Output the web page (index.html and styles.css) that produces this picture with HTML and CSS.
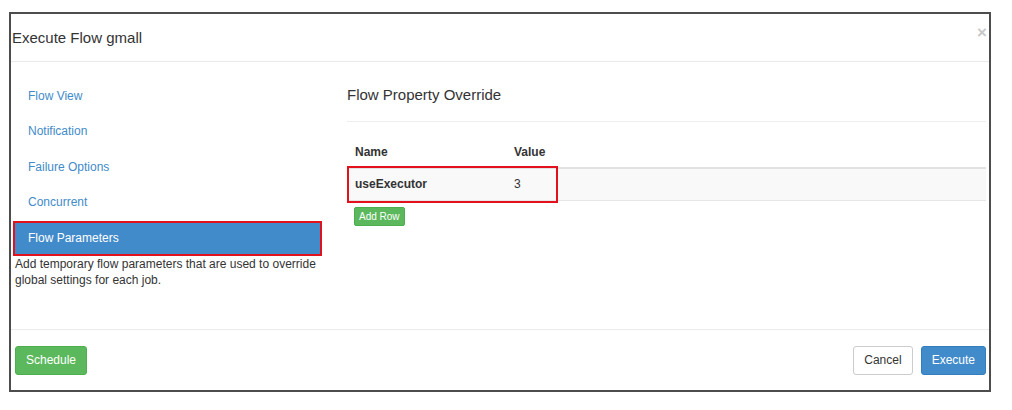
FILE: index.html
```html
<!DOCTYPE html>
<html>
<head>
<meta charset="utf-8">
<link rel="stylesheet" href="styles.css">
</head>
<body>
<div class="modal">
  <div class="modal-header">
    <h4 class="modal-title">Execute Flow gmall</h4>
    <span class="close">×</span>
  </div>
  <div class="modal-body">
    <div class="side">
      <ul class="nav">
        <li class="nav-item">Flow View</li>
        <li class="nav-item">Notification</li>
        <li class="nav-item">Failure Options</li>
        <li class="nav-item">Concurrent</li>
        <li class="nav-item active">Flow Parameters</li>
      </ul>
      <p class="desc">Add temporary flow parameters that are used to override global settings for each job.</p>
    </div>
    <div class="main">
      <h3 class="section-title">Flow Property Override</h3>
      <div class="table-wrap">
        <table class="props">
          <thead>
            <tr><th class="col-name">Name</th><th>Value</th></tr>
          </thead>
          <tbody>
            <tr><td class="col-name">useExecutor</td><td class="val">3</td></tr>
          </tbody>
        </table>
        <div class="mark"></div>
      </div>
      <button class="btn btn-success btn-xs">Add Row</button>
    </div>
  </div>
  <div class="modal-footer">
    <button class="btn btn-success">Schedule</button>
    <div class="footer-right">
      <button class="btn btn-default">Cancel</button>
      <button class="btn btn-primary">Execute</button>
    </div>
  </div>
</div>
</body>
</html>
```
FILE: styles.css
```css
* { box-sizing: border-box; }
html, body { margin: 0; padding: 0; background: #fff; }
body {
  font-family: "Liberation Sans", Arial, sans-serif;
  font-size: 12px;
  color: #333;
}
.modal {
  margin: 12px 0 0 9px;
  width: 982px;
  height: 380px;
  border: 2px solid #4d4d4d;
  display: flex;
  flex-direction: column;
  background: #fff;
}
.modal-header {
  position: relative;
  height: 48px;
  border-bottom: 1px solid #e9e9e9;
  display: flex;
  align-items: center;
  padding-left: 1px;
}
.modal-title {
  margin: 0;
  font-size: 15px;
  font-weight: normal;
  color: #333;
  line-height: 20px;
}
.close {
  position: absolute;
  right: 2px;
  top: 9px;
  font-size: 17px;
  font-weight: bold;
  color: #c8c8c8;
  line-height: 20px;
}
.modal-body {
  flex: 1;
  display: flex;
  gap: 27px;
  padding: 17px 3px 0 4px;
  border-bottom: 1px solid #ebebeb;
}
.side { width: 305px; flex: none; padding-top: 2px; }
.nav {
  list-style: none;
  margin: 0;
  padding: 0;
  display: flex;
  flex-direction: column;
  gap: 4.4px;
}
.nav-item {
  height: 31px;
  line-height: 31px;
  padding: 0 13px;
  color: #428bca;
  font-size: 12px;
}
.nav-item.active {
  background: #428bca;
  color: #fff;
  outline: 2px solid #e3111b;
}
.desc {
  margin: 2px 0 0;
  line-height: 16px;
  font-size: 12px;
  color: #333;
  padding-right: 4px;
}
.main { flex: 1; }
.section-title {
  margin: 6px 0 0;
  font-size: 15px;
  font-weight: normal;
  line-height: 20px;
  padding-bottom: 16px;
  border-bottom: 1px solid #eeeeee;
  color: #333;
}
.table-wrap { position: relative; margin-top: 14px; }
.props {
  width: 100%;
  border-collapse: collapse;
}
.props th, .props td {
  text-align: left;
  padding: 0 8px;
  font-size: 12px;
  font-weight: bold;
}
.props th { height: 32px; border-bottom: 2px solid #e2e2e2; }
.props td { height: 32px; background: #f9f9f9; border-bottom: 1px solid #e6e6e6; }
.props td.val { font-weight: normal; }
.props .col-name { width: 159px; }
.mark {
  position: absolute;
  left: 0;
  top: 30px;
  width: 211px;
  height: 37px;
  border: 2px solid #e3111b;
}
.btn {
  font-family: inherit;
  font-size: 12px;
  height: 29px;
  padding: 0 10px;
  border-radius: 3px;
  border: 1px solid transparent;
  line-height: 27px;
  cursor: pointer;
}
.btn-success { background: #5cb85c; border-color: #4cae4c; color: #fff; }
.btn-primary { background: #428bca; border-color: #357ebd; color: #fff; }
.btn-default { background: #fff; border-color: #ccc; color: #333; }
.btn-xs {
  display: block;
  margin: 6px 0 0 7px;
  height: 19px;
  line-height: 17px;
  padding: 0 4px;
  font-size: 10px;
  border-radius: 2px;
}
.modal-footer {
  display: flex;
  justify-content: space-between;
  align-items: flex-start;
  padding: 16px 3px 0 4px;
  height: 60px;
}
.footer-right { display: flex; gap: 8px; }
```
